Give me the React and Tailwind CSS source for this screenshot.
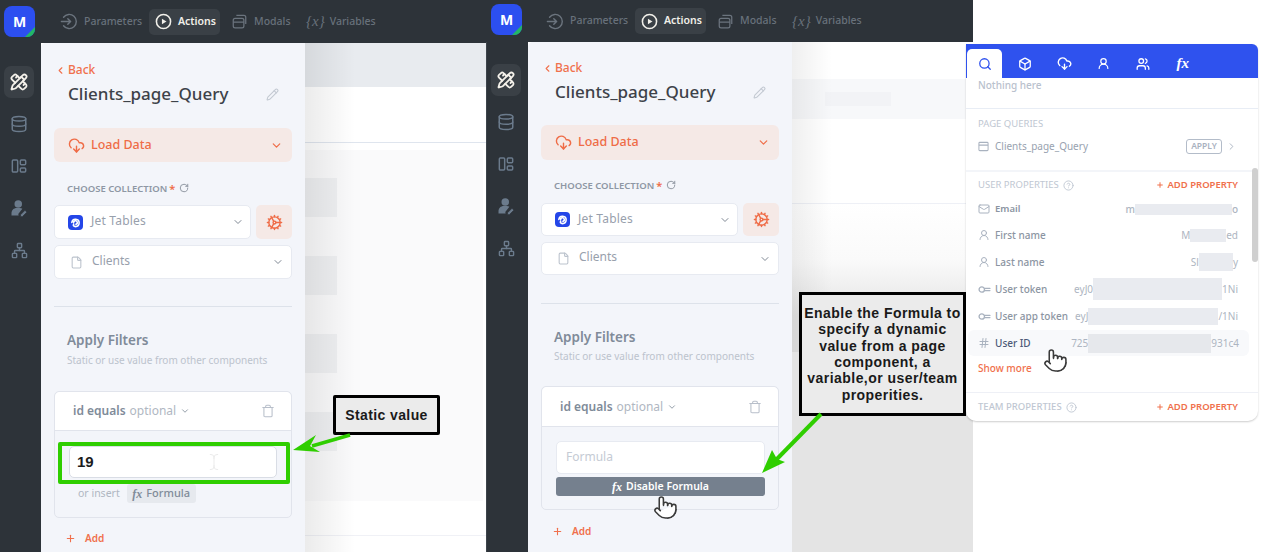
import React from "react";
import {
  ChevronDown, ChevronLeft, ChevronRight, CloudDownload, Cog, File, Pencil, Trash, Plus, Database, Network,
  PencilRuler, Search, Box, UserRound, Users, Mail, Hash, CircleHelp, Pointer, TextCursor, RotateCw,
} from "lucide-react";

const FONT = "font-['Noto_Sans',sans-serif]";

function ParamIcon() {
  return (
    <svg className="shrink-0" width="17" height="17" viewBox="0 0 24 24" fill="none" stroke="#6b747e" strokeWidth="2" strokeLinecap="round" strokeLinejoin="round">
      <path d="M5 6a10 10 0 1 1 0 12" />
      <path d="M2 12h13M11 8l4 4-4 4" />
    </svg>
  );
}
function ActionIcon() {
  return (
    <svg className="shrink-0" width="17" height="17" viewBox="0 0 24 24" fill="none">
      <circle cx="12" cy="12" r="10" stroke="#f2f0ea" strokeWidth="2.2" />
      <path d="M9.8 8l6.4 4-6.4 4z" fill="#f2f0ea" />
    </svg>
  );
}
function ModalIcon() {
  return (
    <svg className="shrink-0" width="15" height="15" viewBox="0 0 24 24" fill="none" stroke="#6b747e" strokeWidth="2" strokeLinejoin="round">
      <rect x="2" y="7" width="17" height="15" rx="3" />
      <path d="M2 13h17M7 2h12a3 3 0 0 1 3 3v11" />
    </svg>
  );
}
function SideDash() {
  return (
    <svg width="16" height="16" viewBox="0 0 24 24" fill="none" stroke="#6b7b8c" strokeWidth="2.2" strokeLinejoin="round">
      <rect x="2" y="3" width="8" height="18" rx="1.5" />
      <rect x="14" y="3" width="8" height="7" rx="1.5" />
      <rect x="14" y="15" width="8" height="6" rx="1.5" />
    </svg>
  );
}
function SideUser() {
  return (
    <svg width="18" height="18" viewBox="0 0 24 24" fill="#6b7b8c">
      <circle cx="11" cy="6.5" r="5" />
      <path d="M2 22v-3c0-4 3-7 7-7h4c1.5 0 2.5.4 3.5 1L11 20l.5 2z" />
      <path d="M14 21l6-6 2.5 2.5-6 6h-2.5z" stroke="#2d3339" strokeWidth="1" />
    </svg>
  );
}
function JetLogo() {
  return (
    <span className="flex h-[15px] w-[15px] shrink-0 items-center justify-center rounded-[4px] bg-[#2446e8]">
      <svg width="11" height="11" viewBox="0 0 24 24" fill="none" stroke="#fff" strokeWidth="3.4" strokeLinecap="round">
        <path d="M4 12a8 8 0 1 1 8 9c-4 0-6-3-4-5" />
        <path d="M8 13a4 4 0 1 1 5 3" />
      </svg>
    </span>
  );
}
function KeyIcon() {
  return (
    <svg width="13" height="13" viewBox="0 0 24 24" fill="none" stroke="#a9b2bf" strokeWidth="2.4" strokeLinecap="round">
      <circle cx="7" cy="12" r="5" />
      <path d="M12 10h10M12 14h10" />
    </svg>
  );
}
function WindowIcon() {
  return (
    <svg width="11" height="11" viewBox="0 0 24 24" fill="none" stroke="#a9b2bf" strokeWidth="2.2">
      <rect x="2" y="3" width="20" height="18" rx="2" />
      <path d="M2 9h20" />
    </svg>
  );
}
function Fx({ className }) {
  return <span className={"font-['Liberation_Serif',serif] italic font-bold " + className}>fx</span>;
}
function Hand() {
  return <Pointer size={25} fill="#fff" stroke="#3a3a3a" strokeWidth={1.5} />;
}

function Logo({ className }) {
  return (
    <div className={"relative flex h-[31px] w-[31px] items-center justify-center overflow-hidden rounded-[8px] bg-[#2c4ff0] text-[14px] font-bold text-white " + className}>
      M
      <svg className="absolute bottom-0 right-0" width="10" height="10" viewBox="0 0 10 10">
        <path d="M10 0v10H0z" fill="#22b765" />
      </svg>
    </div>
  );
}

function TopBar({ h, logo }) {
  return (
    <div className={"flex items-center bg-[#2d3339] text-[10.5px] " + h}>
      <div className="w-[41px] shrink-0">
        <Logo className={logo} />
      </div>
      <div className="ml-[19px] flex w-[79px] items-center gap-[7px] font-medium text-[#68717b]">
        <ParamIcon />
        <span>Parameters</span>
      </div>
      <div className="ml-[10px] flex h-[26px] w-[71px] items-center gap-[6px] rounded-[5px] bg-[#3a4046] px-[6px] font-semibold text-[#f1efe9]">
        <ActionIcon />
        <span>Actions</span>
      </div>
      <div className="ml-[12px] flex w-[56px] items-center gap-[7px] font-medium text-[#68717b]">
        <ModalIcon />
        <span>Modals</span>
      </div>
      <div className="ml-[18px] flex items-center gap-[5px] font-medium text-[#68717b]">
        <span className="font-['Liberation_Serif',serif] text-[15px] italic">{"{x}"}</span>
        <span>Variables</span>
      </div>
    </div>
  );
}

function Sidebar({ pt }) {
  const cls = "flex h-[32px] w-[30px] items-center justify-center rounded-[7px]";
  return (
    <div className={"flex w-[41px] shrink-0 flex-col gap-[10px] bg-[#2d3339] pl-[4px] " + pt}>
      <div className={cls + " bg-[#3a4046]"}>
        <PencilRuler size={18} color="#f4f1ea" strokeWidth={2.4} />
      </div>
      <div className={cls}><Database size={18} color="#6b7b8c" strokeWidth={2} /></div>
      <div className={cls}><SideDash /></div>
      <div className={cls}><SideUser /></div>
      <div className={cls}><Network size={17} color="#6b7b8c" strokeWidth={2} /></div>
    </div>
  );
}

function Panel({ c, children }) {
  return (
    <div className="flex w-[264px] shrink-0 flex-col rounded-tl-[5px] bg-[#f3f5fa] pl-[13px] pr-[13px]">
      <div className={"flex h-[14px] items-center gap-[2px] pl-[1px] text-[12px] font-medium text-[#f0704c] " + c.back}>
        <ChevronLeft size={11} strokeWidth={2.4} />
        <span>Back</span>
      </div>
      <div className={"flex h-[24px] items-center justify-between pl-[14px] pr-[13px] text-[17px] font-medium text-[#3d4249] " + c.title}>
        <span>Clients_page_Query</span>
        <Pencil size={13} color="#c3c9d2" />
      </div>
      <div className={"flex items-center justify-between rounded-[6px] bg-[#f5e9e6] pl-[14px] pr-[9px] text-[12.5px] font-medium text-[#ef6c47] " + c.load}>
        <span className="flex items-center gap-[6px]">
          <CloudDownload size={17} strokeWidth={2} />
          Load Data
        </span>
        <ChevronDown size={13} strokeWidth={2.2} />
      </div>
      <div className={"flex h-[14px] items-center pl-[13px] text-[9.5px] font-semibold text-[#8e97a4] " + c.label}>
        <span>CHOOSE COLLECTION</span>
        <span className="ml-[2px] text-[11px] text-[#ef6c47]">*</span>
        <RotateCw className="mb-[2px] ml-[4px]" size={10} color="#7f8894" strokeWidth={2} />
      </div>
      <div className={"flex gap-[5px] " + c.jetRow}>
        <div className={"flex w-[197px] items-center justify-between rounded-[5px] border border-[#e7eaf1] bg-white pl-[13px] pr-[6px] text-[12px] tracking-[0.2px] text-[#98a0ac] " + c.h}>
          <span className="flex items-center gap-[8px]"><JetLogo /><span className="mb-[2px]">Jet Tables</span></span>
          <ChevronDown size={12} color="#7f8894" />
        </div>
        <div className={"flex w-[36px] items-center justify-center rounded-[5px] bg-[#f5e9e6] " + c.h}>
          <Cog size={17} color="#ef6c47" strokeWidth={2} />
        </div>
      </div>
      <div className={"mt-[6px] flex items-center justify-between rounded-[5px] border border-[#e7eaf1] bg-white pl-[15px] pr-[7px] text-[12px] text-[#98a0ac] " + c.h}>
        <span className="flex items-center gap-[9px]"><File size={13} color="#bcc3cd" /><span className="mb-[3px]">Clients</span></span>
        <ChevronDown size={12} color="#7f8894" />
      </div>
      <div className={"h-px shrink-0 bg-[#dde2ea] " + c.divider} />
      <div className={"flex h-[18px] items-center pl-[13px] text-[13.5px] font-semibold text-[#808b99] " + c.apply}>Apply Filters</div>
      <div className={"flex h-[14px] items-center pl-[13px] text-[10px] text-[#bcc3cd] " + c.desc}>Static or use value from other components</div>
      <div className={"relative flex flex-col rounded-[5px] border border-[#e1e4ec] " + c.card}>
        <div className={"flex shrink-0 items-center justify-between rounded-t-[5px] border-b border-[#e1e4ec] bg-white pl-[18px] pr-[16px] text-[12px] " + c.cardHead}>
          <span className="flex items-center gap-[4px]">
            <span className="font-semibold text-[#808b99]">id equals</span>
            <span className="text-[#b0b7c2]">optional</span>
            <ChevronDown size={10} color="#808b99" />
          </span>
          <Trash size={14} color="#b8bfca" strokeWidth={1.8} />
        </div>
        {children}
      </div>
      <div className={"flex h-[14px] items-center gap-[9px] pl-[11px] text-[10px] font-semibold text-[#f0704c] " + c.add}>
        <Plus size={11} strokeWidth={2.4} />
        <span>Add</span>
      </div>
    </div>
  );
}

const leftCfg = {
  back: "mt-[20px]", title: "mt-[5px]", load: "mt-[22px] h-[34px]", label: "mt-[20px]", jetRow: "mt-[9px]", h: "h-[34px]",
  divider: "mt-[27px]", apply: "mt-[24px]", desc: "mt-[4px]", card: "mt-[24px] h-[127px]", cardHead: "h-[39px]", add: "mt-[13px]",
};
const midCfg = {
  back: "mt-[19px]", title: "mt-[5px]", load: "mt-[21px] h-[35px]", label: "mt-[19px]", jetRow: "mt-[10px]", h: "h-[33px]",
  divider: "mt-[28px]", apply: "mt-[24px]", desc: "mt-[3px]", card: "mt-[23px] h-[124px]", cardHead: "h-[40px]", add: "mt-[14px]",
};

function LeftBackground() {
  const strip = "h-[39px] w-[32px] bg-[#eff0f2]";
  return (
    <div className="relative flex flex-1 flex-col bg-white">
      <div className="h-[44px] shrink-0 bg-[#e8ebef]" />
      <div className="h-[56px] shrink-0 border-b border-[#dfe5ee] bg-white" />
      <div className="mr-[3px] mt-[7px] flex h-[351px] shrink-0 flex-col gap-[39px] bg-[#fafafb] pt-[28px]">
        <div className={strip} />
        <div className={strip} />
        <div className={strip} />
        <div className={strip} />
      </div>
      <div className="mt-[34px] h-px bg-[#f0f1f6]" />
      <div className="absolute bottom-0 left-0 top-0 w-[50px] bg-gradient-to-r from-[#00000014] to-transparent" />
    </div>
  );
}

function MidBackground() {
  return (
    <div className="relative flex flex-1 flex-col bg-white">
      <div className="h-[37px] shrink-0 bg-white" />
      <div className="flex h-[40px] shrink-0 items-center bg-[#f7f8fa] pl-[33px]">
        <div className="h-[14px] w-[66px] bg-[#f2f3f6]" />
      </div>
      <div className="h-[85px] shrink-0 border-b border-[#eef0f6] bg-white" />
      <div className="h-[112px] shrink-0 bg-gradient-to-b from-white via-[#fafafa] to-[#e4e4e4]" />
      <div className="flex-1 bg-[#e4e4e4]" />
      <div className="absolute left-0 top-0 h-[310px] w-[40px] bg-gradient-to-r from-[#00000010] to-transparent" />
    </div>
  );
}

function Row({ icon, label, bold, pre, blockW, blockH, post, className = "" }) {
  return (
    <div className={"flex h-[22px] items-center justify-between pl-[12px] pr-[20px] text-[10px] text-[#adb5c1] " + className}>
      <span className="flex items-center">
        <span className="flex w-[17px] items-center">{icon}</span>
        <span className={bold}>{label}</span>
      </span>
      <span className="flex items-center">
        <span>{pre}</span>
        <span className={"bg-[#e9ebf0] " + blockW + " " + blockH} />
        <span>{post}</span>
      </span>
    </div>
  );
}

function AddProp() {
  return (
    <span className="flex items-center gap-[3px] text-[9.5px] font-semibold text-[#f0704c]">
      <Plus size={8} strokeWidth={3} />ADD PROPERTY
    </span>
  );
}

function Popup() {
  const tab = "flex w-[39.5px] items-center justify-center";
  const userIcon = <UserRound size={12} color="#a9b2bf" />;
  return (
    <div className="absolute left-[966px] top-[44px] flex h-[377px] w-[292px] flex-col overflow-hidden rounded-b-[10px] rounded-tr-[6px] bg-white shadow-[0_1px_2px_rgba(0,0,0,0.2)]">
      <div className="flex h-[34px] shrink-0 items-end bg-[#2f52ee] pl-[1px]">
        <div className="flex h-[29px] w-[35px] items-center justify-center rounded-t-[5px] bg-white">
          <Search size={14} color="#2f52ee" strokeWidth={2.2} />
        </div>
        <div className="ml-[3px] flex h-[29px]">
          <div className={tab}><Box size={14} color="#fff" strokeWidth={2.2} /></div>
          <div className={tab}><CloudDownload size={15} color="#fff" strokeWidth={2.2} /></div>
          <div className={tab}><UserRound size={13} color="#fff" strokeWidth={2.2} /></div>
          <div className={tab}><Users size={14} color="#fff" strokeWidth={2.2} /></div>
          <div className={tab}><Fx className="text-[15px] text-white" /></div>
        </div>
      </div>
      <div className="flex h-[14px] shrink-0 items-center pl-[12px] text-[10px] font-medium text-[#b9c1cd]">Nothing here</div>
      <div className="mt-[16px] h-px shrink-0 bg-[#e8edf5]" />
      <div className="mt-[9px] flex h-[12px] shrink-0 items-center pl-[12px] text-[9.5px] text-[#c0c7d2]">PAGE QUERIES</div>
      <div className="mt-[8px] flex h-[16px] shrink-0 items-center justify-between pl-[12px] pr-[21px] text-[10px] text-[#98a2af]">
        <span className="flex items-center"><span className="flex w-[17px]"><WindowIcon /></span>Clients_page_Query</span>
        <span className="flex items-center gap-[4px]">
          <span className="flex h-[15px] w-[36px] items-center justify-center rounded-[3px] border border-[#b3bcc9] text-[8.5px] font-semibold text-[#a9b2bf]">APPLY</span>
          <ChevronRight size={11} color="#a9b2bf" />
        </span>
      </div>
      <div className="mt-[16px] h-[2px] shrink-0 bg-[#f3f5f9]" />
      <div className="mt-[7px] flex h-[12px] shrink-0 items-center justify-between pl-[12px] pr-[20px] text-[9.5px] text-[#c0c7d2]">
        <span className="flex items-center gap-[4px]">USER PROPERTIES <CircleHelp size={11} color="#c0c7d2" /></span>
        <AddProp />
      </div>
      <Row className="mt-[7px] font-medium" bold="font-semibold text-[#8c95a2] text-[9.5px]" icon={<Mail size={12} color="#a9b2bf" />} label="Email" pre="m" blockW="w-[97px]" blockH="h-[11px]" post="o" />
      <Row className="mt-[4px]" bold="font-medium text-[#8c95a2]" icon={userIcon} label="First name" pre="M" blockW="w-[36px]" blockH="h-[13px]" post="ed" />
      <Row className="mt-[5px]" bold="font-medium text-[#8c95a2]" icon={userIcon} label="Last name" pre="Sl" blockW="w-[34px]" blockH="h-[18px]" post="y" />
      <Row className="mt-[5px]" bold="font-medium text-[#8c95a2]" icon={<KeyIcon />} label="User token" pre="eyJ0" blockW="w-[129px]" blockH="h-[22px]" post="1Ni" />
      <Row className="mt-[5px]" bold="font-medium text-[#8c95a2]" icon={<KeyIcon />} label="User app token" pre="eyJ" blockW="w-[130px]" blockH="h-[17px]" post="/1Ni" />
      <div className="ml-[2px] mr-[9px] mt-[3px] flex h-[26px] shrink-0 items-center justify-between rounded-[6px] bg-[#f8f9fb] pl-[10px] pr-[10px] text-[10px] text-[#adb5c1]">
        <span className="flex items-center">
          <span className="flex w-[17px]"><Hash size={12} color="#a9b2bf" /></span>
          <span className="font-medium text-[#4c5a78]">User ID</span>
        </span>
        <span className="flex items-center">
          <span>725</span>
          <span className="h-[19px] w-[123px] bg-[#e6e8ec]" />
          <span>931c4</span>
        </span>
      </div>
      <div className="mt-[5px] flex h-[14px] shrink-0 items-center pl-[12px] text-[10px] font-medium text-[#f0704c]">Show more</div>
      <div className="mt-[17px] h-px shrink-0 bg-[#eef0f6]" />
      <div className="mt-[8px] flex h-[12px] shrink-0 items-center justify-between pl-[12px] pr-[20px] text-[9.5px] font-medium text-[#c0c7d2]">
        <span className="flex items-center gap-[4px]">TEAM PROPERTIES <CircleHelp size={11} color="#c0c7d2" /></span>
        <AddProp />
      </div>
      <div className="absolute right-0 top-[124px] h-[94px] w-[6px] rounded-[3px] bg-[#cfcfcf]" />
    </div>
  );
}

export default function App() {
  return (
    <div className={"relative flex h-[552px] w-[1264px] overflow-hidden bg-white " + FONT}>
      <div className="flex h-full w-[486px] shrink-0 flex-col">
        <TopBar h="h-[43px]" logo="ml-[4px]" />
        <div className="flex flex-1">
          <Sidebar pt="pt-[23px]" />
          <Panel c={leftCfg}>
            <div className="ml-[14px] mt-[15px] flex h-[32px] w-[208px] shrink-0 items-center rounded-[5px] border border-[#d9dde5] bg-white pl-[7px] font-['Liberation_Sans',sans-serif] text-[15px] font-bold text-[#1c1c1c]">
              19
              <TextCursor className="ml-[111px]" size={18} color="#e4e4e4" strokeWidth={1} />
            </div>
            <div className="mt-[6px] flex h-[19px] items-center gap-[7px] pl-[23px] text-[10.5px]">
              <span className="text-[#b0b7c2]">or insert</span>
              <span className="flex h-[19px] w-[69px] items-center justify-center gap-[4px] rounded-[3px] bg-[#e6e9ee] text-[11px] font-medium text-[#808b99]"><Fx className="text-[12px]" />Formula</span>
            </div>
            <div className="absolute left-[3px] top-[50px] h-[42px] w-[232px] rounded-[2px] border-[4px] border-[#2fce00]" />
          </Panel>
          <LeftBackground />
        </div>
      </div>

      <div className="flex h-full w-[487px] shrink-0 flex-col">
        <TopBar h="h-[42px]" logo="ml-[5px] mt-[-3px]" />
        <div className="flex flex-1">
          <div className="w-px bg-[#3d444b]" />
          <Sidebar pt="pt-[22px]" />
          <Panel c={midCfg}>
            <div className="ml-[14px] mt-[14px] flex h-[33px] w-[209px] shrink-0 items-center rounded-[5px] border border-[#e7eaf1] bg-white pb-[2px] pl-[9px] text-[12px] text-[#c5cbd4]">Formula</div>
            <div className="ml-[14px] mt-[3px] flex h-[19px] w-[209px] items-center justify-center gap-[4px] rounded-[3px] bg-[#75808e] text-[10.5px] font-semibold text-white"><Fx className="text-[12px]" />Disable Formula</div>
          </Panel>
          <MidBackground />
        </div>
      </div>

      <Popup />

      <div className="absolute left-[333px] top-[395px] flex h-[40px] w-[107px] items-center justify-center rounded-[2px] border-[3px] border-black bg-[#ebebeb] font-['Liberation_Sans',sans-serif] text-[14px] font-bold tracking-[0.4px] text-[#1a1a1a]">Static value</div>
      <div className="absolute left-[799px] top-[292px] flex h-[124px] w-[167px] items-center justify-center border-[3px] border-black bg-[#ebebeb] px-px text-center font-['Liberation_Sans',sans-serif] text-[14px] font-bold leading-[16.4px] tracking-[0.45px] text-[#1a1a1a]">
        Enable the Formula to specify a dynamic value from a page component, a variable,or user/team properities.
      </div>

      <svg className="pointer-events-none absolute left-0 top-0" width="1264" height="552">
        <path d="M350 435 L312 446" stroke="#2fce00" strokeWidth="3.5" />
        <path d="M293 450 L316 435 L310 446 L320 452 Z" fill="#2fce00" />
        <path d="M821 414 L774 462" stroke="#2fce00" strokeWidth="4" />
        <path d="M762 473 L772 450 L777 459 L785 462 Z" fill="#2fce00" />
      </svg>

      <div className="absolute left-[653px] top-[495px]"><Hand /></div>
      <div className="absolute left-[1043px] top-[348px]"><Hand /></div>
    </div>
  );
}
